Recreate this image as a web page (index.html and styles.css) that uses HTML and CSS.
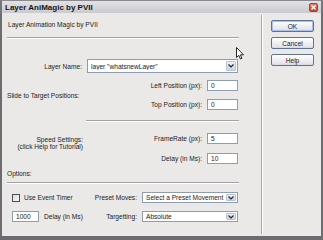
FILE: index.html
```html
<!DOCTYPE html>
<html>
<head>
<meta charset="utf-8">
<link rel="stylesheet" href="styles.css">
</head>
<body>
<div class="win">
  <div class="title">
    <span class="title-text">Layer AniMagic by PVII</span>
    <span class="close"><svg width="9" height="9" viewBox="0 0 9 9"><path d="M2.5 2.5L6.5 6.5M6.5 2.5L2.5 6.5" stroke="#fff" stroke-width="1.3"/></svg></span>
  </div>
  <div class="frame">
    <div class="main">
      <div class="head">Layer Animation Magic by PVII</div>
      <div class="hr full hr1"></div>

      <div class="row name-row">
        <span class="lbl">Layer Name:</span>
        <div class="select name-select"><span class="val">layer "whatsnewLayer"</span><span class="arrow"><svg width="6" height="4" viewBox="0 0 6 4"><path d="M0.5 0.5L3 3L5.5 0.5" fill="none" stroke="#223" stroke-width="1.2"/></svg></span></div>
      </div>

      <div class="section slide">
        <div class="side-lbl">Slide to Target Positions:</div>
        <div class="fields slide-fields">
          <div class="field"><span>Left Position (px):</span><div class="input">0</div></div>
          <div class="field"><span>Top Position (px):</span><div class="input">0</div></div>
        </div>
      </div>

      <div class="hr part"></div>

      <div class="section speed">
        <div class="speed-lbl">Speed Settings:<br>(click Help for Tutorial)</div>
        <div class="fields speed-fields">
          <div class="field"><span>FrameRate (px):</span><div class="input">5</div></div>
          <div class="field"><span>Delay (in Ms):</span><div class="input">10</div></div>
        </div>
      </div>

      <div class="opts-lbl">Options:</div>
      <div class="hr full hr3"></div>

      <div class="opt-row first">
        <div class="opt-a"><span class="check"></span><span>Use Event Timer</span></div>
        <span class="opt-lbl">Preset Moves:</span>
        <div class="select opt-select"><span class="val">Select a Preset Movement</span><span class="arrow"><svg width="6" height="4" viewBox="0 0 6 4"><path d="M0.5 0.5L3 3L5.5 0.5" fill="none" stroke="#223" stroke-width="1.2"/></svg></span></div>
      </div>
      <div class="opt-row second">
        <div class="opt-a"><div class="input small">1000</div><span class="delay">Delay (in Ms)</span></div>
        <span class="opt-lbl">Targetting:</span>
        <div class="select opt-select"><span class="val">Absolute</span><span class="arrow"><svg width="6" height="4" viewBox="0 0 6 4"><path d="M0.5 0.5L3 3L5.5 0.5" fill="none" stroke="#223" stroke-width="1.2"/></svg></span></div>
      </div>
    </div>
    <div class="vsep"></div>
    <div class="btns">
      <div class="btn default">OK</div>
      <div class="btn">Cancel</div>
      <div class="btn">Help</div>
    </div>
  </div>
  <svg class="cursor" width="8" height="13" viewBox="0 0 8 13"><path d="M0.5 0.5L0.5 10.5L2.8 8.3L4.4 12L5.9 11.3L4.4 7.8L7.5 7.8Z" fill="#fff" stroke="#111" stroke-width="0.9" stroke-linejoin="round"/></svg>
</div>
</body>
</html>
```

FILE: styles.css
```css
* { box-sizing: border-box; }
body {
  margin: 0;
  background: #fff;
  font-family: "Liberation Sans", Arial, sans-serif;
  font-size: 6.6px;
  color: #222;
}
.win {
  width: 323px;
  height: 240px;
  display: flex;
  flex-direction: column;
  background: #eae9e7;
  position: relative;
  overflow: hidden;
}
.title {
  height: 13px;
  flex: none;
  display: flex;
  align-items: center;
  padding-left: 3px;
  border-top: 1px solid #8a8a8e;
  border-left: 2px solid #76767a;
  border-right: 2px solid #76767a;
  background: linear-gradient(#e2e2e6, #c9c9cf);
  font-weight: bold;
  font-size: 8px;
  color: #151515;
}
.title-text { flex: 1; }
.close {
  width: 9px;
  height: 9px;
  margin-right: 3px;
  border-radius: 2px;
  background: linear-gradient(#e8846c, #cc3d22);
  border: 1px solid #a8402c;
  display: flex;
  align-items: center;
  justify-content: center;
}
.close svg { display: block; margin: -1px; }
.frame {
  flex: 1;
  display: flex;
  border-left: 2px solid #6c6c70;
  border-right: 2px solid #6c6c70;
  border-bottom: 4px solid #6c6c70;
}
.main {
  width: 259px;
  padding-left: 5px;
  padding-right: 23px;
  display: flex;
  flex-direction: column;
}
.head {
  margin-top: 8px;
  line-height: 7px;
  padding-left: 1px;
}
.hr {
  height: 2px;
  flex: none;
  border-top: 1px solid #a2a2a4;
  border-bottom: 1px solid #fff;
}
.hr.full { width: 232px; }
.hr1 { margin-top: 9px; }
.hr3 { margin-top: 5px; }
.hr.part { width: 153px; margin-left: 79px; margin-top: 10px; }

.row { display: flex; align-items: center; }
.name-row { margin-top: 20px; }
.lbl { width: 75px; text-align: right; margin-right: 5px; }

.select {
  display: flex;
  align-items: center;
  background: #fff;
  border: 1px solid #8d9db5;
  padding-left: 3px;
  flex: none;
}
.select .val { flex: 1; white-space: nowrap; overflow: hidden; }
.select .arrow {
  width: 10px;
  align-self: stretch;
  margin: 1px;
  border: 1px solid #b9c3d6;
  border-radius: 1px;
  background: linear-gradient(#eef0f6, #cfd4e0);
  display: flex;
  align-items: center;
  justify-content: center;
}
.name-select { width: 151px; height: 14px; }

.section { display: flex; }
.slide { margin-top: 7px; align-items: center; }
.side-lbl { flex: 1; }
.fields { display: flex; flex-direction: column; width: 140px; }
.field {
  display: flex;
  align-items: center;
  justify-content: flex-end;
  height: 11px;
}
.field span { margin-right: 5px; }
.slide-fields { gap: 8px; }
.speed { margin-top: 11px; }
.speed-fields { gap: 9px; margin-left: auto; }
.speed-lbl {
  width: 76px;
  text-align: right;
  line-height: 7px;
  margin-top: 3px;
}
.input {
  width: 31px;
  height: 11px;
  flex: none;
  background: #fff;
  border: 1px solid #8d9db5;
  padding-left: 3px;
  line-height: 9px;
}
.input.small { width: 27px; }

.opts-lbl { margin-top: 6px; line-height: 7px; }

.opt-row { display: flex; align-items: center; height: 11px; }
.opt-row.first { margin-top: 8px; }
.opt-row.second { margin-top: 8px; }
.opt-a {
  width: 85px;
  padding-left: 5px;
  display: flex;
  align-items: center;
}
.check {
  width: 8px;
  height: 8px;
  flex: none;
  border: 1px solid #4a4f5a;
  background: linear-gradient(135deg, #dcdcd8, #fafafa);
  margin-right: 4px;
}
.delay { margin-left: 5px; }
.opt-lbl { width: 45px; text-align: right; margin-right: 5px; }
.opt-select { width: 96px; height: 11px; }

.vsep {
  width: 2px;
  margin: 2px 0;
  border-left: 1px solid #a6a6a8;
  border-right: 1px solid #fff;
}
.btns {
  padding-left: 8px;
  padding-top: 7px;
  display: flex;
  flex-direction: column;
  gap: 5px;
}
.btn {
  width: 43px;
  height: 12px;
  border: 1px solid #5f7398;
  border-radius: 2px;
  background: linear-gradient(#ffffff, #e6e6ec 80%, #d6d6de);
  display: flex;
  align-items: center;
  justify-content: center;
}
.btn.default {
  box-shadow: inset 0 0 0 1px #a9c1e6;
}
.cursor {
  position: absolute;
  left: 236px;
  top: 47px;
}
```
